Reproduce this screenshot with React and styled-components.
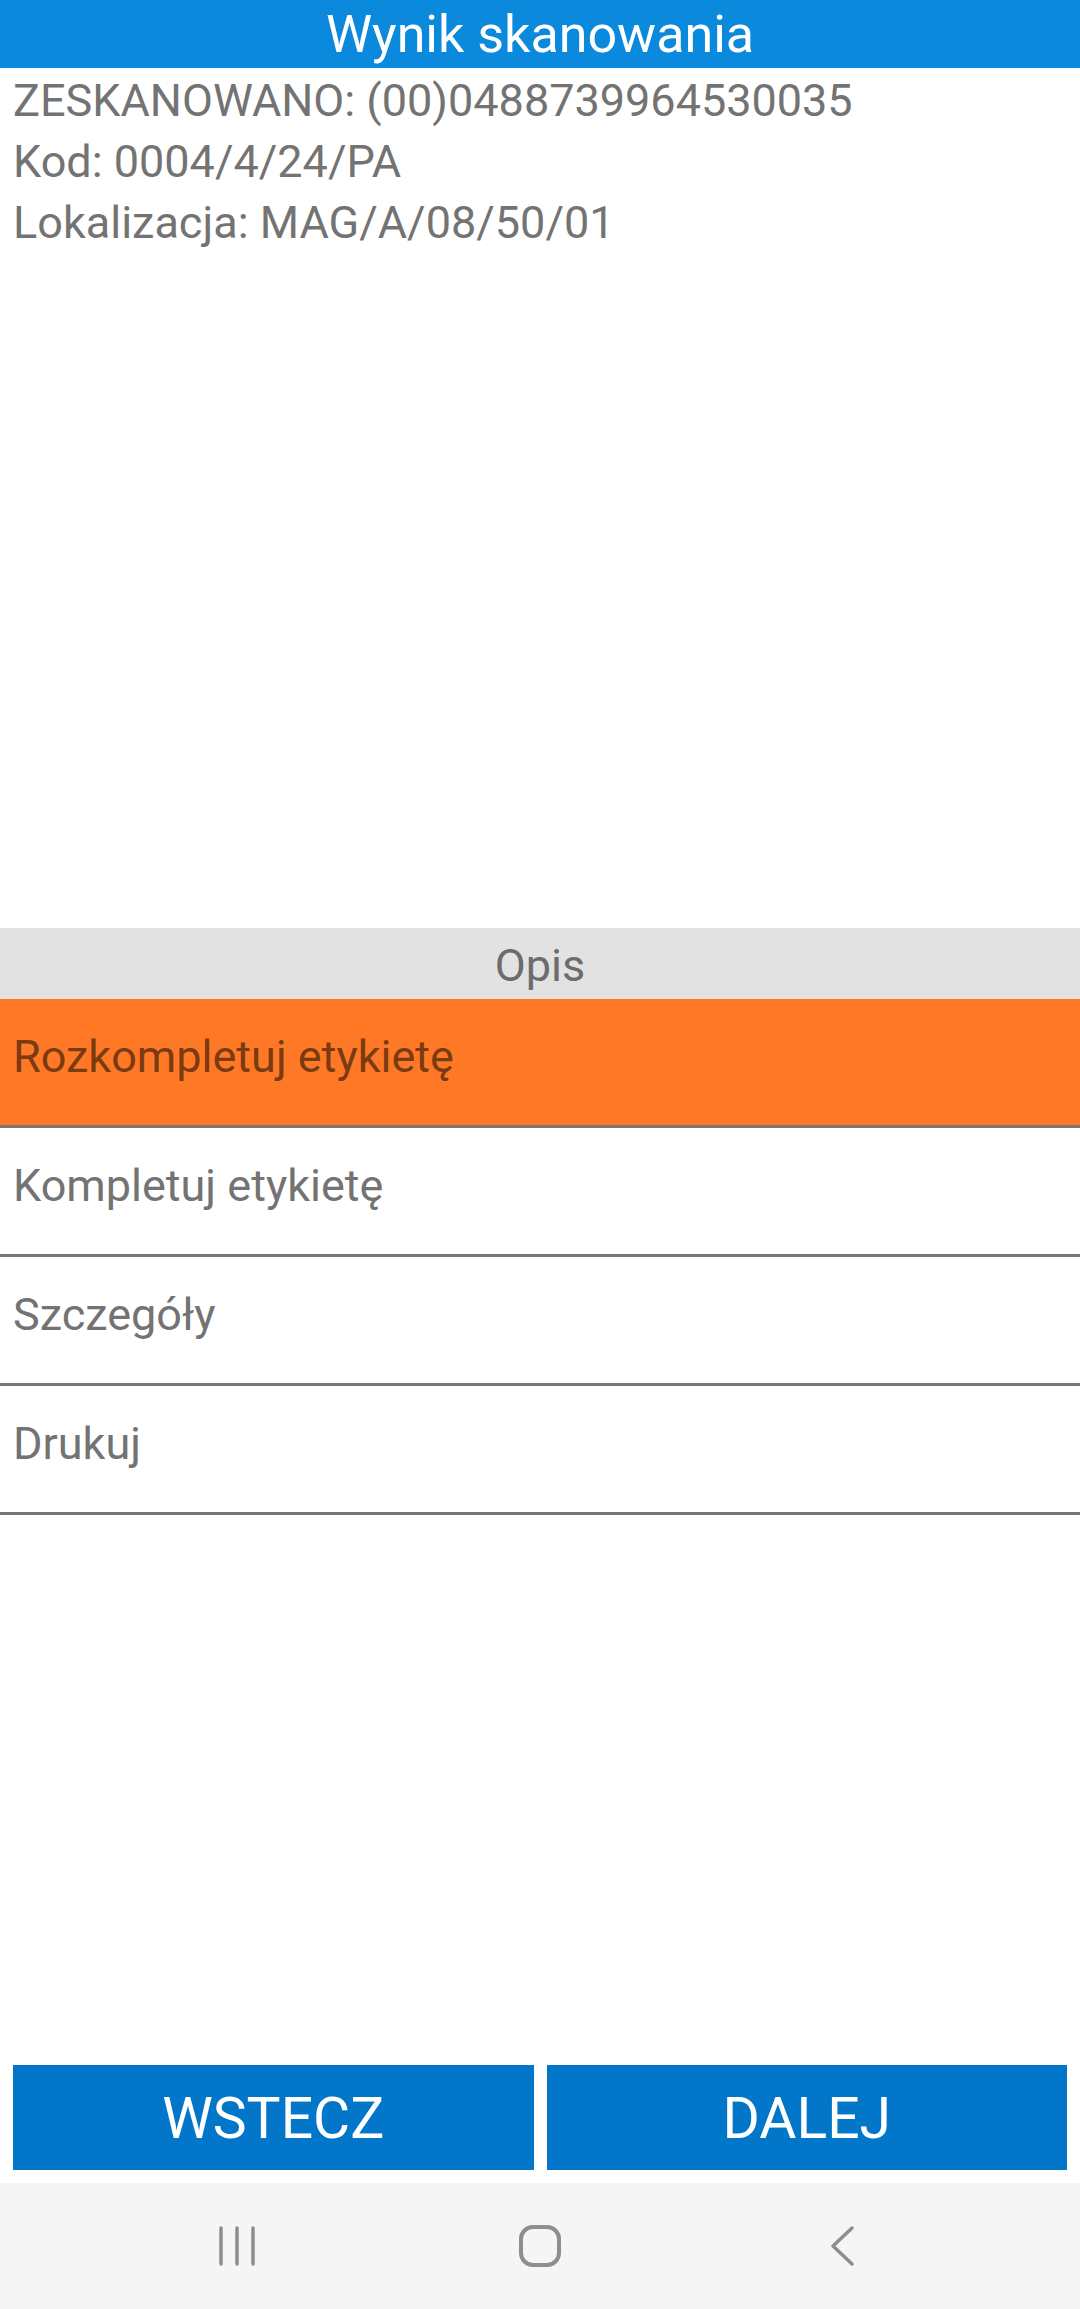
import React from "react";
import styled, { createGlobalStyle } from "styled-components";

const GlobalStyle = createGlobalStyle`
    html, body {
        margin: 0;
        padding: 0;
        background: #ffffff;
    }
    body {
        font-family: Roboto, "Noto Sans", "Liberation Sans", sans-serif;
    }
`;

const options = [
    { label: "Rozkompletuj etykietę", active: true },
    { label: "Kompletuj etykietę" },
    { label: "Szczegóły" },
    { label: "Drukuj" },
];

export default function App() {
    return (
        <>
            <GlobalStyle />
            <Screen>
                <Header>Wynik skanowania</Header>
                <Info>
                    <InfoLine>ZESKANOWANO: (00)0488739964530035</InfoLine>
                    <InfoLine>Kod: 0004/4/24/PA</InfoLine>
                    <InfoLine>Lokalizacja: MAG/A/08/50/01</InfoLine>
                </Info>
                <ListHead>Opis</ListHead>
                <OptionList>
                    {options.map((o) => (
                        <Option key={o.label} $active={o.active}>
                            {o.label}
                        </Option>
                    ))}
                </OptionList>
                <Spacer />
                <Actions>
                    <ActionButton>WSTECZ</ActionButton>
                    <ActionButton>DALEJ</ActionButton>
                </Actions>
                <NavBar>
                    <NavSlot>
                        <svg width="40" height="42" viewBox="0 0 40 42">
                            <g stroke="#8e8e8e" strokeWidth="3.5" strokeLinecap="round">
                                <line x1="3" y1="3" x2="3" y2="39" />
                                <line x1="19" y1="3" x2="19" y2="39" />
                                <line x1="35" y1="3" x2="35" y2="39" />
                            </g>
                        </svg>
                    </NavSlot>
                    <NavSlot>
                        <svg width="44" height="44" viewBox="0 0 44 44">
                            <rect x="3" y="3" width="38" height="38" rx="12" fill="none" stroke="#8e8e8e" strokeWidth="4" />
                        </svg>
                    </NavSlot>
                    <NavSlot>
                        <svg width="26" height="42" viewBox="0 0 26 42">
                            <polyline points="23,3 4,21 23,39" fill="none" stroke="#8e8e8e" strokeWidth="3.5" strokeLinecap="round" strokeLinejoin="round" />
                        </svg>
                    </NavSlot>
                </NavBar>
            </Screen>
        </>
    );
}

const Screen = styled.div`
    display: flex;
    flex-direction: column;
    height: 2309px;
    width: 1080px;
    background: #ffffff;
`;

const Header = styled.div`
    height: 68px;
    box-sizing: border-box;
    padding-top: 4px;
    background: #0a89dd;
    color: #ffffff;
    font-size: 52px;
    text-align: center;
    line-height: 61px;
    border-bottom: 1px solid #0a89dd;
`;

const Info = styled.div`
    height: 860px;
    box-sizing: border-box;
    padding: 2px 13px 0;
`;

const InfoLine = styled.div`
    font-size: 45px;
    line-height: 61px;
    color: #737373;
`;

const ListHead = styled.div`
    height: 71px;
    box-sizing: border-box;
    padding-top: 2px;
    background: #e2e2e2;
    color: #6c6c6c;
    font-size: 45px;
    line-height: 71px;
    text-align: center;
`;

const OptionList = styled.div`
    display: flex;
    flex-direction: column;
`;

const Option = styled.div`
    height: 129px;
    box-sizing: border-box;
    padding: 32px 13px 0;
    border-bottom: 3px solid #767676;
    background: ${(p) => (p.$active ? "#ff7826" : "#ffffff")};
    color: ${(p) => (p.$active ? "#7a3a12" : "#737373")};
    font-size: 45px;
    line-height: 1.172;
`;

const Spacer = styled.div`
    flex: 1;
`;

const Actions = styled.div`
    display: grid;
    grid-template-columns: 1fr 1fr;
    gap: 13px;
    padding: 0 13px;
    margin-bottom: 13px;
`;

const ActionButton = styled.button`
    height: 105px;
    border: none;
    border-radius: 0;
    background: #0277c9;
    color: #ffffff;
    font-family: Roboto, "Noto Sans", "Liberation Sans", sans-serif;
    font-size: 57px;
    padding: 2px 0 0;
`;

const NavBar = styled.div`
    height: 126px;
    background: #f5f5f5;
    display: grid;
    grid-template-columns: repeat(3, 302px);
    justify-content: center;
    align-items: center;
`;

const NavSlot = styled.div`
    display: flex;
    justify-content: center;
    align-items: center;
`;
